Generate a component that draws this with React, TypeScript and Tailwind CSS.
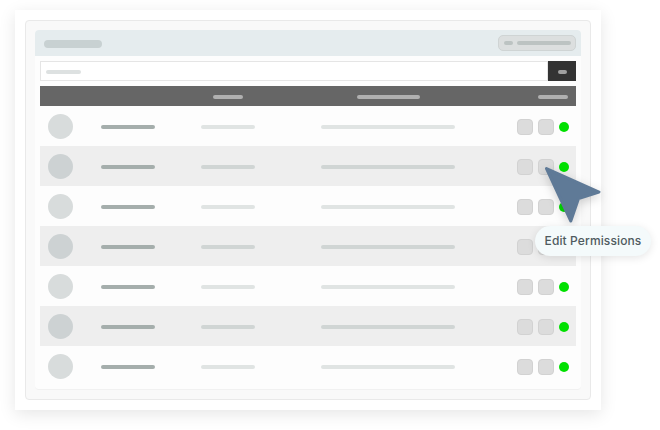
const rows = [0, 1, 2, 3, 4, 5, 6];

function Row({ index }: { index: number }) {
  const odd = index % 2 === 1;
  return (
    <div className={`flex h-10 items-center pl-2 ${odd ? "bg-[#eeeeee]" : "bg-[#fdfdfd]"}`}>
      <div className={`h-[25px] w-[25px] shrink-0 rounded-full ${odd ? "bg-[#cdd2d3]" : "bg-[#d8dcdc]"}`} />
      <div className="ml-7 mt-px h-1 w-[54px] shrink-0 rounded-full bg-[#a5aeac]" />
      <div className={`ml-[46px] mt-px h-1 w-[54px] shrink-0 rounded-full ${odd ? "bg-[#d0d5d4]" : "bg-[#e0e4e3]"}`} />
      <div className={`ml-[66px] mt-px h-1 w-[134px] shrink-0 rounded-full ${odd ? "bg-[#d0d5d4]" : "bg-[#e0e4e3]"}`} />
      <div className="ml-[62px] mt-px h-4 w-4 shrink-0 rounded-[4px] border border-[#d2d2d2] bg-[#dcdcdc]" />
      <div className="ml-[5px] mt-px h-4 w-4 shrink-0 rounded-[4px] border border-[#d2d2d2] bg-[#dcdcdc]" />
      <div className="ml-[5px] mt-px h-2.5 w-2.5 shrink-0 rounded-full bg-[#00e000]" />
    </div>
  );
}

export default function App() {
  return (
    <div className="relative h-[430px] w-[660px] overflow-hidden bg-white pl-[15px] pt-2.5">
      <div className="h-[400px] w-[586px] bg-white pl-2.5 pt-2.5 shadow-[0_4px_16px_rgba(0,0,0,0.10)]">
        <div className="h-[380px] w-[566px] rounded-[4px] border border-[#e9e9e9] bg-[#f9f9f9] pl-[9px] pt-[9px]">
          <div className="h-[360px] w-[546px] rounded-[4px] border-b border-[#f1f1f1] bg-[#fdfdfd]">
            <div className="flex h-[26px] items-center justify-between rounded-t-[4px] bg-[#e5ecee] pl-[9px] pr-[5px]">
              <div className="mt-px h-2 w-[58px] rounded-full bg-[#c8d1d2]" />
              <div className="flex h-4 w-[78px] items-center gap-1 rounded-[5px] border border-[#cfd4d4] bg-[#dcdfdf] pl-[5px]">
                <div className="h-1 w-[9px] rounded-full bg-[#bcc3c2]" />
                <div className="h-1 w-[54px] rounded-full bg-[#bcc3c2]" />
              </div>
            </div>
            <div className="px-[5px]">
              <div className="mt-[5px] flex h-5">
                <div className="flex flex-1 items-center border border-[#e5e5e5] bg-white pl-[5px]">
                  <div className="mt-px h-1 w-[35px] rounded-full bg-[#dde1e1]" />
                </div>
                <div className="flex w-7 items-center justify-center bg-[#333333]">
                  <div className="mt-px h-1 w-[9px] rounded-full bg-[#a0a0a0]" />
                </div>
              </div>
              <div className="mt-[5px] flex h-5 items-center bg-[#666666]">
                <div className="ml-[173px] mt-px h-1 w-[30px] rounded-full bg-[#b0b0b0]" />
                <div className="ml-[114px] mt-px h-1 w-[63px] rounded-full bg-[#b0b0b0]" />
                <div className="ml-[118px] mt-px h-1 w-[30px] rounded-full bg-[#b0b0b0]" />
              </div>
              {rows.map((i) => (
                <Row key={i} index={i} />
              ))}
            </div>
          </div>
        </div>
      </div>
      <svg
        className="absolute left-[540px] top-[160px] drop-shadow-[0_3px_5px_rgba(0,0,0,0.18)]"
        width="66"
        height="68"
        viewBox="540 160 66 68"
      >
        <path
          d="M546.5 168.5 L599 192 L578.5 198.5 L570.8 221 Z"
          fill="#5f7a97"
          stroke="#5f7a97"
          strokeWidth="3"
          strokeLinejoin="round"
        />
      </svg>
      <div className="absolute left-[535px] top-[226px] flex h-[30px] w-[116px] items-center justify-center rounded-full bg-[#f4fafb] text-[12px] font-medium tracking-[0.01em] text-[#4f5b5f] shadow-[0_2px_8px_rgba(0,0,0,0.10)] [font-family:'Inter',sans-serif]">
        Edit Permissions
      </div>
    </div>
  );
}
